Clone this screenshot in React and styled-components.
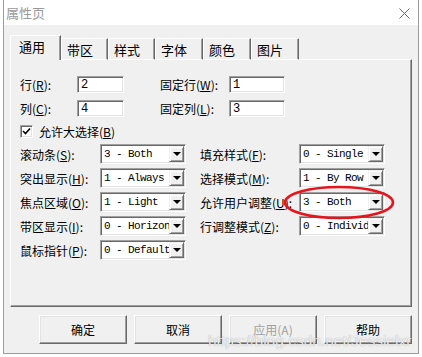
import React from "react";
import styled, { createGlobalStyle } from "styled-components";

const GlobalStyle = createGlobalStyle`
  html, body {
    margin: 0;
    padding: 0;
    background: #ffffff;
  }
  body {
    font-family: "Noto Sans CJK SC", "DejaVu Sans", sans-serif;
  }
`;

const CJK = `"Noto Sans CJK SC", "Liberation Sans", sans-serif`;
const MONO = `"Liberation Mono", "Noto Sans CJK SC", monospace`;

const tabs = [
  { label: "通用", width: 51, active: true },
  { label: "带区", width: 47 },
  { label: "样式", width: 47 },
  { label: "字体", width: 48 },
  { label: "颜色", width: 48 },
  { label: "图片", width: 48 },
];

const textRows = [
  { a: "行", ak: "R", av: "2", b: "固定行", bk: "W", bv: "1" },
  { a: "列", ak: "C", av: "4", b: "固定列", bk: "L", bv: "3" },
];

const comboRows = [
  { a: "滚动条", ak: "S", av: "3 - Both", b: "填充样式", bk: "F", bv: "0 - Single" },
  { a: "突出显示", ak: "H", av: "1 - Always", b: "选择模式", bk: "M", bv: "1 - By Row" },
  { a: "焦点区域", ak: "O", av: "1 - Light", b: "允许用户调整", bk: "U", bv: "3 - Both" },
  { a: "带区显示", ak: "I", av: "0 - Horizontal", b: "行调整模式", bk: "Z", bv: "0 - Individual" },
  { a: "鼠标指针", ak: "P", av: "0 - Default" },
];

const buttons = [
  { label: "确定" },
  { label: "取消" },
  { label: "应用", key: "A", disabled: true },
  { label: "帮助" },
];

const Window = styled.div`
  position: relative;
  margin-left: 3px;
  width: 416px;
  height: 354px;
  box-sizing: border-box;
  border: 1px solid #9c9c9c;
  border-top: none;
  background: #f0f0f0;
  overflow: hidden;
`;

const TitleBar = styled.div`
  height: 25px;
  background: #ffffff;
  display: flex;
  align-items: center;
  justify-content: space-between;
  padding: 0 8px 0 2px;
  font-family: ${CJK};
  font-size: 13px;
  color: #9a9a9a;
`;

const CloseIcon = styled.svg`
  width: 11px;
  height: 11px;
  margin-top: 1px;
`;

const Body = styled.div`
  padding: 10px 6px 0 6px;
`;

const TabStrip = styled.div`
  display: flex;
  align-items: flex-end;
  height: 25px;
  position: relative;
  z-index: 1;
  margin-bottom: -1px;
`;

const Tab = styled.div`
  box-sizing: border-box;
  width: ${(p) => p.$w}px;
  height: ${(p) => (p.$active ? 25 : 22)}px;
  background: #f0f0f0;
  border-top: 1px solid #ffffff;
  border-left: 1px solid #ffffff;
  border-right: 1px solid #696969;
  box-shadow: inset -1px 0 #a0a0a0;
  border-bottom: ${(p) => (p.$active ? "none" : "1px solid #ffffff")};
  font-family: ${CJK};
  font-size: 13px;
  color: #000;
  padding-left: ${(p) => (p.$active ? 8 : 5)}px;
  line-height: ${(p) => (p.$active ? 22 : 21)}px;
`;

const Panel = styled.div`
  position: relative;
  box-sizing: border-box;
  width: 402px;
  height: 248px;
  border-top: 1px solid #ffffff;
  border-left: 1px solid #ffffff;
  border-right: 1px solid #696969;
  border-bottom: 1px solid #696969;
  box-shadow: inset -1px -1px #a0a0a0;
  padding: 16px 0 0 9px;
`;

const TextRows = styled.div`
  display: flex;
  flex-direction: column;
  gap: 7px;
`;

const Row = styled.div`
  display: flex;
  align-items: center;
  height: ${(p) => p.$h}px;
`;

const Label = styled.span`
  box-sizing: border-box;
  width: ${(p) => p.$w}px;
  flex: none;
  font-family: ${CJK};
  font-size: 12px;
  color: #000;
  white-space: nowrap;
  margin-left: ${(p) => p.$ml || 0}px;

  u {
    text-decoration: underline;
    text-underline-offset: 1px;
  }
`;

const Sunken = styled.div`
  box-sizing: border-box;
  flex: none;
  width: ${(p) => p.$w}px;
  height: ${(p) => p.$h}px;
  background: #ffffff;
  border-top: 1px solid #a0a0a0;
  border-left: 1px solid #a0a0a0;
  border-right: 1px solid #ffffff;
  border-bottom: 1px solid #ffffff;
  box-shadow: inset 1px 1px #696969, inset -1px -1px #e3e3e3;
  display: flex;
  align-items: center;
  overflow: hidden;
`;

const InputText = styled.span`
  font-family: ${MONO};
  font-size: 12px;
  color: #000;
  padding-left: 3px;
`;

const CheckRow = styled.div`
  display: flex;
  align-items: center;
  gap: 6px;
  height: 13px;
  margin-top: 8px;
`;

const CheckBox = styled.div`
  box-sizing: border-box;
  width: 13px;
  height: 13px;
  background: #fff;
  border-top: 1px solid #a0a0a0;
  border-left: 1px solid #a0a0a0;
  border-right: 1px solid #ffffff;
  border-bottom: 1px solid #ffffff;
  box-shadow: inset 1px 1px #696969, inset -1px -1px #e3e3e3;
  display: flex;
  align-items: center;
  justify-content: center;
`;

const ComboGrid = styled.div`
  display: grid;
  grid-template-columns: 80px 86px 14px 99px 86px;
  grid-auto-rows: 20px;
  row-gap: 4px;
  margin-top: 6px;
  align-items: center;
`;

const ComboText = styled.span`
  flex: 1;
  overflow: hidden;
  white-space: nowrap;
  font-family: ${MONO};
  font-size: 11px;
  letter-spacing: -0.6px;
  padding-left: 3px;
  color: #000;
`;

const DropButton = styled.div`
  box-sizing: border-box;
  flex: none;
  width: 15px;
  height: 16px;
  margin-right: 1px;
  background: #f0f0f0;
  border-top: 1px solid #f0f0f0;
  border-left: 1px solid #f0f0f0;
  border-right: 1px solid #696969;
  border-bottom: 1px solid #696969;
  box-shadow: inset 1px 1px #ffffff, inset -1px -1px #a0a0a0;
  display: flex;
  align-items: center;
  justify-content: center;

  &::after {
    content: "";
    border-left: 4px solid transparent;
    border-right: 4px solid transparent;
    border-top: 4px solid #000;
  }
`;

const Highlight = styled.svg`
  position: absolute;
  left: 272px;
  top: 125px;
  width: 112px;
  height: 35px;
  pointer-events: none;
`;

const ButtonRow = styled.div`
  display: flex;
  justify-content: flex-end;
  gap: 7px;
  margin-top: 8px;
`;

const Button = styled.div`
  box-sizing: border-box;
  width: 88px;
  height: 29px;
  background: #f0f0f0;
  border-top: 1px solid #ffffff;
  border-left: 1px solid #ffffff;
  border-right: 1px solid #696969;
  border-bottom: 1px solid #696969;
  box-shadow: inset -1px -1px #a0a0a0, inset 1px 1px #e3e3e3;
  display: flex;
  align-items: center;
  justify-content: center;
  font-family: ${CJK};
  font-size: 12px;
  color: ${(p) => (p.$disabled ? "#a0a0a0" : "#000")};
`;

const Watermark = styled.div`
  position: absolute;
  left: 204px;
  top: 332px;
  font-family: "Liberation Sans", Arial, sans-serif;
  font-size: 15.5px;
  color: rgba(255, 255, 255, 0.85);
  text-shadow: 0 0 1px rgba(80, 80, 80, 0.6);
  white-space: nowrap;
  pointer-events: none;
`;

const Mn = ({ text, k }) => (
  <>
    {text}(<u>{k}</u>):
  </>
);

const Combo = ({ value }) => (
  <Sunken $w={86} $h={20}>
    <ComboText>{value}</ComboText>
    <DropButton />
  </Sunken>
);

export default function App() {
  return (
    <>
      <GlobalStyle />
      <Window>
        <TitleBar>
          <span>属性页</span>
          <CloseIcon viewBox="0 0 11 11">
            <path d="M0.5 0.5 L10.5 10.5 M10.5 0.5 L0.5 10.5" stroke="#6a6a6a" strokeWidth="1" fill="none" />
          </CloseIcon>
        </TitleBar>
        <Body>
          <TabStrip>
            {tabs.map((t) => (
              <Tab key={t.label} $w={t.width} $active={t.active}>
                {t.label}
              </Tab>
            ))}
          </TabStrip>
          <Panel>
            <TextRows>
              {textRows.map((r) => (
                <Row key={r.a} $h={17}>
                  <Label $w={57}>
                    <Mn text={r.a} k={r.ak} />
                  </Label>
                  <Sunken $w={47} $h={17}>
                    <InputText>{r.av}</InputText>
                  </Sunken>
                  <Label $w={69} $ml={36}>
                    <Mn text={r.b} k={r.bk} />
                  </Label>
                  <Sunken $w={56} $h={17}>
                    <InputText>{r.bv}</InputText>
                  </Sunken>
                </Row>
              ))}
            </TextRows>
            <CheckRow>
              <CheckBox>
                <svg width="9" height="9" viewBox="0 0 9 9">
                  <path d="M1 4 L3.5 6.5 L8 1.5" stroke="#000" strokeWidth="1.6" fill="none" />
                </svg>
              </CheckBox>
              <Label>
                允许大选择(<u>B</u>)
              </Label>
            </CheckRow>
            <ComboGrid>
              {comboRows.map((r) => (
                <React.Fragment key={r.a}>
                  <Label>
                    <Mn text={r.a} k={r.ak} />
                  </Label>
                  <Combo value={r.av} />
                  <span />
                  {r.b ? (
                    <>
                      <Label>
                        <Mn text={r.b} k={r.bk} />
                      </Label>
                      <Combo value={r.bv} />
                    </>
                  ) : (
                    <>
                      <span />
                      <span />
                    </>
                  )}
                </React.Fragment>
              ))}
            </ComboGrid>
            <Highlight viewBox="0 0 112 35">
              <ellipse cx="56" cy="17.5" rx="54" ry="15.5" fill="none" stroke="#e8141c" strokeWidth="2.6" />
            </Highlight>
          </Panel>
          <ButtonRow>
            {buttons.map((b) => (
              <Button key={b.label} $disabled={b.disabled}>
                {b.label}
                {b.key && (
                  <>
                    (<span>{b.key}</span>)
                  </>
                )}
              </Button>
            ))}
          </ButtonRow>
        </Body>
        <Watermark>https://blog.csdn.net/Jessielxr</Watermark>
      </Window>
    </>
  );
}
